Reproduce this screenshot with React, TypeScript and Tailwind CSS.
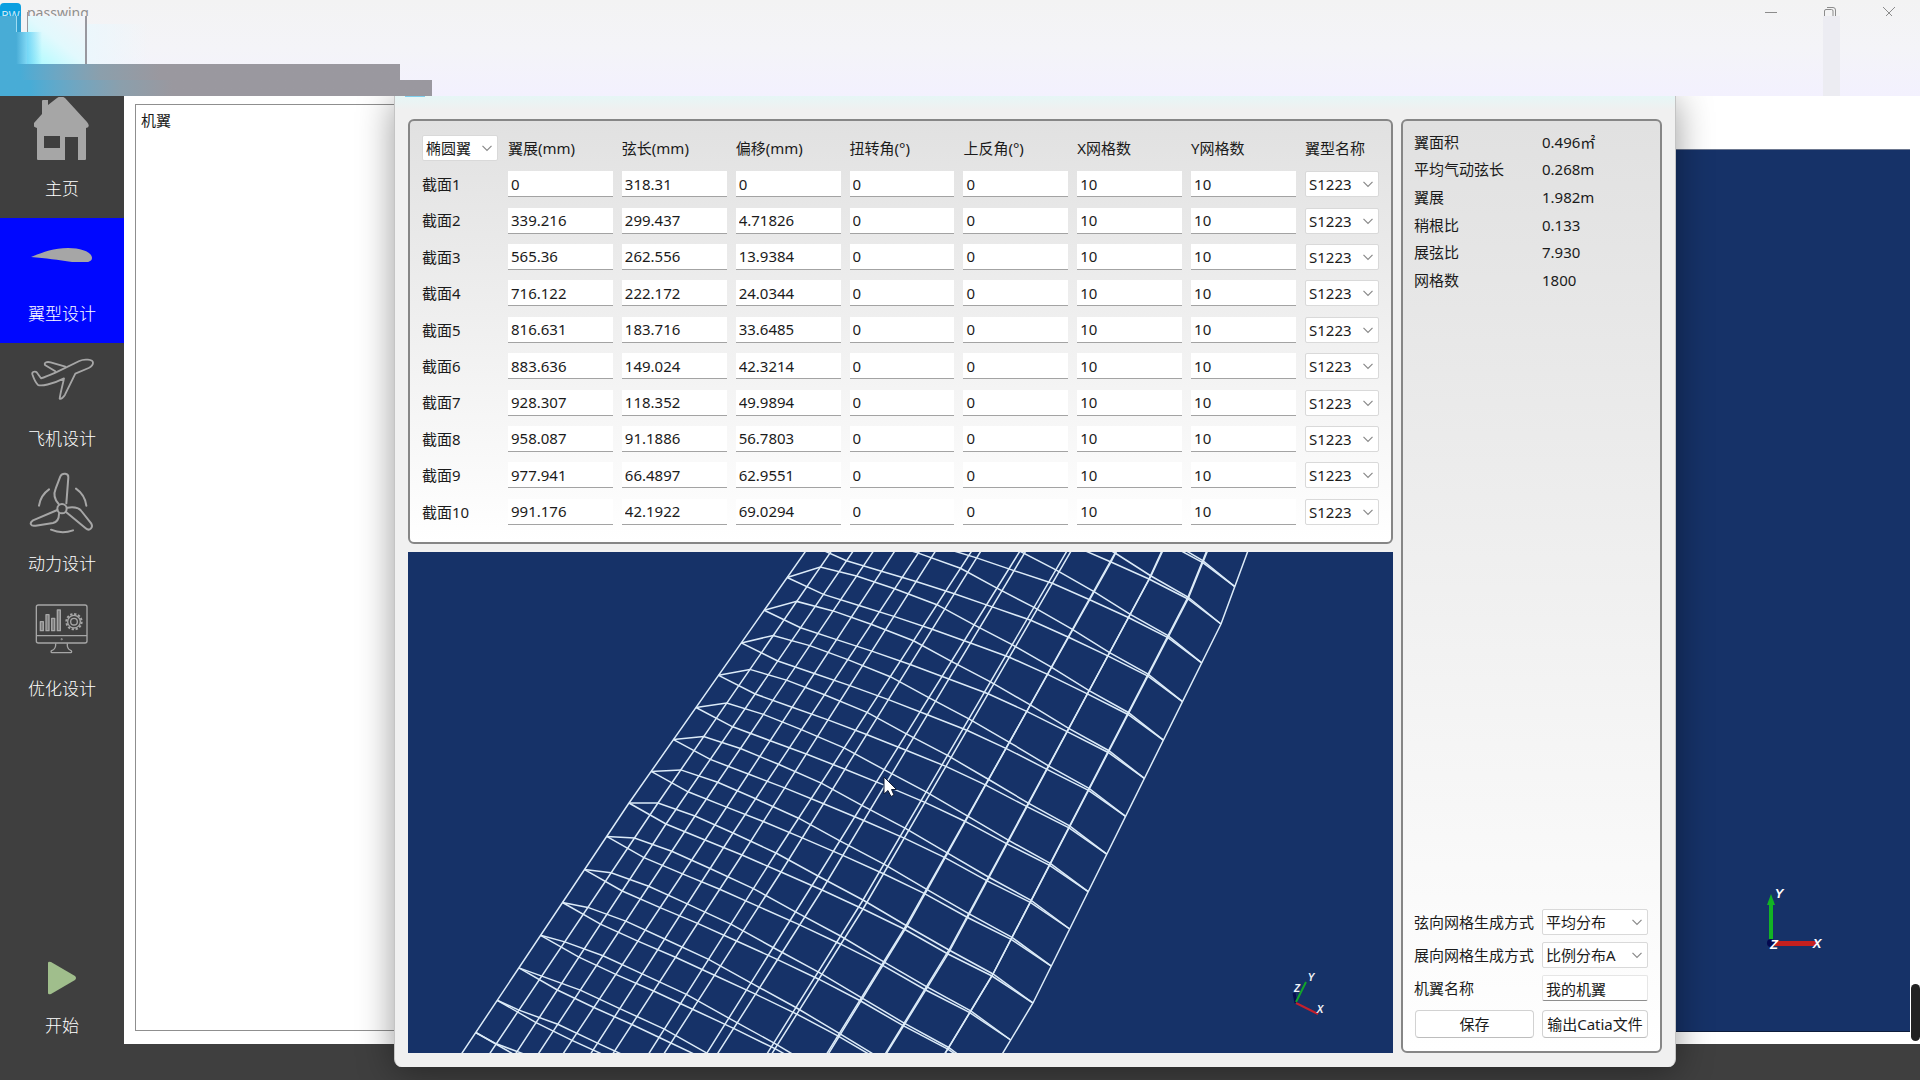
import { useState, type ReactNode } from 'react';

type Point = [number, number];

interface Section {
  rib: number;
  upper: Point[];
  lower: Point[];
}

const COLUMNS = ['翼展(mm)', '弦长(mm)', '偏移(mm)', '扭转角(°)', '上反角(°)', 'X网格数', 'Y网格数'];

const ROWS = [
  ['0', '318.31', '0', '0', '0', '10', '10'],
  ['339.216', '299.437', '4.71826', '0', '0', '10', '10'],
  ['565.36', '262.556', '13.9384', '0', '0', '10', '10'],
  ['716.122', '222.172', '24.0344', '0', '0', '10', '10'],
  ['816.631', '183.716', '33.6485', '0', '0', '10', '10'],
  ['883.636', '149.024', '42.3214', '0', '0', '10', '10'],
  ['928.307', '118.352', '49.9894', '0', '0', '10', '10'],
  ['958.087', '91.1886', '56.7803', '0', '0', '10', '10'],
  ['977.941', '66.4897', '62.9551', '0', '0', '10', '10'],
  ['991.176', '42.1922', '69.0294', '0', '0', '10', '10'],
];

const STATS = [
  ['翼面积', '0.496㎡'],
  ['平均气动弦长', '0.268m'],
  ['翼展', '1.982m'],
  ['稍根比', '0.133'],
  ['展弦比', '7.930'],
  ['网格数', '1800'],
];

// projected section outlines, leading edge first
const SECTIONS: Section[] = [
  {
    rib: -5,
    upper: [[903, 410], [938, 393], [973, 399], [1010, 409], [1050, 423], [1084, 441], [1117, 458], [1153, 480], [1185, 503], [1218, 523], [1249, 548]],
    lower: [[903, 410], [939, 424], [972, 432], [1005, 440], [1042, 450], [1077, 461], [1114, 472], [1149, 489], [1183, 505], [1218, 525], [1249, 548]],
  },
  {
    rib: -3,
    upper: [[857, 478], [892, 463], [928, 470], [966, 481], [1008, 495], [1043, 514], [1078, 532], [1115, 553], [1151, 576], [1188, 597], [1221, 624]],
    lower: [[857, 478], [893, 493], [927, 502], [961, 511], [999, 522], [1036, 534], [1074, 546], [1111, 562], [1149, 579], [1188, 599], [1221, 624]],
  },
  {
    rib: 7,
    upper: [[629, 803], [658, 803], [695, 816], [733, 833], [776, 853], [818, 876], [863, 900], [907, 926], [949, 950], [993, 974], [1033, 1003]],
    lower: [[629, 803], [666, 824], [705, 840], [742, 855], [781, 872], [822, 890], [863, 909], [904, 929], [948, 954], [992, 976], [1033, 1003]],
  },
  {
    rib: 17,
    upper: [[412, 1128], [429, 1144], [469, 1159], [510, 1179], [556, 1200], [599, 1225], [644, 1251], [690, 1279], [730, 1307], [776, 1333], [816, 1363]],
    lower: [[412, 1128], [452, 1151], [486, 1170], [525, 1189], [564, 1209], [605, 1230], [647, 1252], [688, 1278], [731, 1305], [776, 1333], [816, 1363]],
  },
];

function blend(a: Point[], b: Point[], t: number): Point[] {
  return a.map(([x, y], i) => [x + (b[i][0] - x) * t, y + (b[i][1] - y) * t]);
}

function toPoints(points: Point[]) {
  return points.map(([x, y]) => `${x.toFixed(1)},${y.toFixed(1)}`).join(' ');
}

function buildWing() {
  const lines: string[] = [];
  for (let s = 0; s < SECTIONS.length - 1; s++) {
    const a = SECTIONS[s];
    const b = SECTIONS[s + 1];
    const count = b.rib - a.rib;
    // the last rib of a segment is the first of the next one
    for (let i = 0; i < count; i++) {
      const u = i / count;
      const t = u * (1 + 0.03 * (1 - u));
      lines.push(toPoints(blend(a.upper, b.upper, t)));
      lines.push(toPoints(blend(a.lower, b.lower, t)));
    }
  }
  for (let j = 0; j <= 10; j++) {
    lines.push(toPoints(SECTIONS.map((s) => s.upper[j])));
    if (j > 0 && j < 10) lines.push(toPoints(SECTIONS.map((s) => s.lower[j])));
  }
  return lines;
}

const WING_LINES = buildWing();

function HomeIcon() {
  return (
    <svg width="57" height="64" viewBox="34 97 57 64" fill="#a6a6a6">
      <path
        fillRule="evenodd"
        d="M42 101q0-1 1-1h5v5l9-7q4-3 8 0l22 24q4 5-1 6v31q0 1-1 1h-7v-23H65v23H38q-1 0-1-1v-31q-5-1-3-5l8-9zM44 136v12h16v-12z"
      />
    </svg>
  );
}

function AirfoilIcon() {
  return (
    <svg width="62" height="16" viewBox="31 247 62 16" fill="#a6a6a6">
      <path d="M31 258c10-4 22-9 37-9c13 0 24 4 24 10c0 6-13 5-20 4c-14-2-26-4-41-5z" />
    </svg>
  );
}

function PlaneIcon() {
  return (
    <svg width="65" height="45" viewBox="88 57 195 135" fill="none" stroke="#a6a6a6" strokeWidth="5.5" strokeLinecap="round" strokeLinejoin="round">
      <path d="M277 74C277 64 250 62 236 69L166 103C150 110 134 117 121 121L109 104C104 98 93 101 95 109C99 121 104 133 111 140C120 146 155 139 190 121C186 142 180 160 177 182C181 185 188 178 193 170L224 107L264 90C273 85 277 81 277 74Z" />
      <path d="M164 100L134 82C128 74 138 70 150 73L194 86" />
    </svg>
  );
}

function PropellerIcon() {
  return (
    <svg width="66" height="65" viewBox="88 393 198 195" fill="none" stroke="#a6a6a6" strokeWidth="6" strokeLinecap="round" strokeLinejoin="round">
      <circle cx="187" cy="503" r="14" />
      <path d="M177 489C161 472 163 455 168 443L182 406C188 394 207 396 206 409L200 487" />
      <path d="M199 513L258 562C270 572 281 559 275 548L245 510C236 498 222 497 203 500" />
      <path d="M173 507L100 538C88 546 93 557 108 554L160 546C172 543 178 532 178 518" />
      <path d="M118 494A73 73 0 0 1 148 445M229 443A73 73 0 0 1 260 494M154 566A90 90 0 0 0 220 568" />
    </svg>
  );
}

function MonitorIcon() {
  return (
    <svg width="54" height="51" viewBox="105 792 162 153" fill="none" stroke="#a6a6a6" strokeWidth="4" strokeLinejoin="round">
      <rect x="109" y="795" width="152" height="114" rx="6" />
      <path d="M109 887H261M167 910C168 922 163 929 155 932C152 934 153 938 156 938H212C216 938 216 933 212 931C204 928 201 920 202 910" />
      <path d="M121 845h9v27h-9zM138 824h9v48h-9zM155 835h9v37h-9zM172 810h9v62h-9z" fill="#7c7c7c" />
      <circle cx="222" cy="845" r="10" />
      <circle cx="222" cy="845" r="19" />
      <circle cx="222" cy="845" r="23" strokeWidth="6" strokeDasharray="7 5" />
      <circle cx="185" cy="898" r="1" />
    </svg>
  );
}

const NAV: { label: string; icon: ReactNode }[] = [
  { label: '主页', icon: <HomeIcon /> },
  { label: '翼型设计', icon: <AirfoilIcon /> },
  { label: '飞机设计', icon: <PlaneIcon /> },
  { label: '动力设计', icon: <PropellerIcon /> },
  { label: '优化设计', icon: <MonitorIcon /> },
];

function TitleBar() {
  return (
    <header className="relative z-20 h-24 shrink-0 overflow-hidden bg-linear-to-b from-[#f3f3f3] via-[#f4f4f8] to-[#f3f1fe]">
      <div className="flex h-4 items-start overflow-hidden">
        <div className="mt-[3px] h-6 w-[21px] shrink-0 rounded-t bg-[#0a9fe0] pt-[5px] text-center text-xs leading-4 text-[#c9e6f3]">PW</div>
        <h1 className="ml-1.5 text-sm leading-[26px] text-[#8f8f8f]">passwing</h1>
        <div className="ml-auto flex items-start gap-[47px] pr-[25px] pt-1.5 text-[#8c8c8c]">
          <button type="button" aria-label="最小化" className="block h-3 w-3">
            <svg width="12" height="12" viewBox="0 0 12 12" stroke="currentColor"><path d="M0 6.5H12" /></svg>
          </button>
          <button type="button" aria-label="还原" className="block h-3 w-3">
            <svg width="12" height="12" viewBox="0 0 12 12" fill="none" stroke="currentColor">
              <path d="M0.5 12V5Q0.5 3.500 2 3.500H7.500Q9 3.500 9 5V12M3 1.500H9Q11.500 1.500 11.500 4V12" />
            </svg>
          </button>
          <button type="button" aria-label="关闭" className="block h-3 w-3">
            <svg width="12" height="12" viewBox="0 0 12 12" stroke="currentColor"><path d="M0 1L12 13M12 1L0 13" /></svg>
          </button>
        </div>
      </div>
      {/* smeared strips below the caption */}
      <div className="absolute left-0 top-6 h-10 w-[150px] bg-linear-to-r from-[#a8fbff] via-[#eaf7fd] to-transparent" />
      <div className="absolute left-[27px] top-4 h-12 w-[60px] border-r-2 border-[#98989f] bg-linear-to-tr from-[#a4fbff] via-[#e2f9fd] to-[#f3f3f8]" />
      <div className="absolute left-[26px] top-8 h-8 w-4 bg-linear-to-r from-[#6fd4f5] to-transparent" />
      <div className="absolute left-[27px] top-3 h-5 w-px bg-[#98989f]" />
      <div className="absolute left-0 top-4 h-20 w-[27px] bg-linear-to-r from-[#48acd6] from-60% to-[#7fd8f5]" />
      <div className="absolute left-4 top-4 h-4 w-[5px] border-l border-[#9fdcf2] bg-[#2f9fd0]" />
      <div className="absolute left-[21px] top-4 h-4 w-1.5 bg-[#f3f3f5]" />
      <div className="absolute left-0 top-16 h-4 w-[400px] bg-linear-to-r from-[#48acd6] from-5% via-[#8b9fac] via-25% to-[#9a989f] to-40%" />
      <div className="absolute left-0 top-20 h-4 w-[432px] bg-linear-to-r from-[#48acd6] from-7% via-[#8b9fac] via-28% to-[#9a989f] to-40%" />
      <div className="absolute right-20 top-4 h-20 w-[17px] bg-[#ececf2]" />
    </header>
  );
}

function Sidebar() {
  return (
    <nav className="flex w-[124px] shrink-0 flex-col bg-[#3f3f3f] text-[17px] font-light text-white">
      <div className="-mt-[3px]">
        {NAV.map((item) => (
          <button
            key={item.label}
            type="button"
            className={`flex h-[125px] w-full flex-col items-center ${item.label === '翼型设计' ? 'bg-[#0007ff]' : ''}`}
          >
            <span className="flex h-[72px] items-center">{item.icon}</span>
            <span className="leading-[48px]">{item.label}</span>
          </button>
        ))}
      </div>
      <button type="button" className="mb-8 mt-auto flex flex-col items-center">
        <span className="flex h-[52px] items-center">
          <svg width="28" height="34" viewBox="0 0 28 34" fill="#a0be8c">
            <path d="M0 2Q0 0 3 1L27 15Q29 17 27 19L3 33Q0 34 0 32Z" />
          </svg>
        </span>
        <span className="leading-[44px]">开始</span>
      </button>
    </nav>
  );
}

function Select({ label, id, options }: { label?: string; id?: string; options: string[] }) {
  return (
    <span className="relative block w-full">
      <select
        id={id}
        aria-label={label}
        className="block h-[26px] w-full appearance-none rounded-xs border border-[#d9d9d9] bg-white pl-[3px] pr-4 leading-6 text-[#1b1b1b] outline-none"
      >
        {options.map((o) => (
          <option key={o}>{o}</option>
        ))}
      </select>
      <svg className="pointer-events-none absolute right-1.5 top-2.5" width="10" height="7" viewBox="0 0 10 7" fill="none" stroke="#8a8a8a" strokeWidth="1.2">
        <path d="M0.500 0.800L5 5.500L9.500 0.800" />
      </svg>
    </span>
  );
}

function SectionTable() {
  const [rows, setRows] = useState(ROWS);

  function update(r: number, c: number, value: string) {
    setRows(rows.map((row, i) => (i === r ? row.map((v, j) => (j === c ? value : v)) : row)));
  }

  return (
    <div className="rounded-md border-2 border-[#868686] bg-linear-to-b from-[#e1e1e1] to-white px-3 pb-3 pt-[9px]">
      <table className="h-[400px] w-full table-fixed text-left">
        <thead>
          <tr className="h-9">
            <th className="w-[86px] p-0 pr-[10px] font-normal">
              <Select label="翼平面形状" options={['椭圆翼', '矩形翼', '梯形翼']} />
            </th>
            {COLUMNS.map((c) => (
              <th key={c} scope="col" className="p-0 font-normal">{c}</th>
            ))}
            <th scope="col" className="w-[74px] p-0 font-normal">翼型名称</th>
          </tr>
        </thead>
        <tbody>
          {rows.map((row, r) => (
            <tr key={r} className="h-9">
              <th scope="row" className="p-0 font-normal">截面{r + 1}</th>
              {row.map((value, c) => (
                <td key={c} className="p-0 pr-[9px]">
                  <input
                    type="text"
                    aria-label={`截面${r + 1} ${COLUMNS[c]}`}
                    value={value}
                    onChange={(e) => update(r, c, e.target.value)}
                    className="block h-[26px] w-full border-b border-[#a3a3a3] bg-white px-[3px] text-[#1b1b1b] outline-none"
                  />
                </td>
              ))}
              <td className="p-0">
                <Select label={`截面${r + 1} 翼型名称`} options={['S1223', 'NACA0012', 'CLARK Y']} />
              </td>
            </tr>
          ))}
        </tbody>
      </table>
    </div>
  );
}

function WingView() {
  return (
    <div className="min-h-0 flex-1 bg-[#163268]">
      <svg className="block h-full w-full" viewBox="408 552 985 501" preserveAspectRatio="xMidYMid slice">
        <g fill="none" stroke="#dcebf8" strokeWidth="1.500">
          {WING_LINES.map((points, i) => (
            <polyline key={i} points={points} />
          ))}
        </g>
        <g strokeWidth="2" fill="none">
          <path d="M1296 1003L1294 993" stroke="#06104f" strokeWidth="3" />
          <path d="M1296 1002L1306 982" stroke="#12a52a" />
          <path d="M1296 1003L1318 1014" stroke="#c4202c" />
        </g>
        <g fill="#f2f4f8" fontFamily="Liberation Sans, sans-serif" fontSize="10" fontStyle="italic" fontWeight="bold" textAnchor="middle">
          <text x="1311" y="981">Y</text>
          <text x="1297" y="992">Z</text>
          <text x="1320" y="1013">X</text>
        </g>
        <path d="M884 777V794L888 790.500L891 796.500L894 795L891.500 789.500H896.500Z" fill="#fff" stroke="#111d38" strokeWidth="1" />
      </svg>
    </div>
  );
}

function SidePanel() {
  return (
    <aside className="flex w-[261px] shrink-0 flex-col justify-between rounded-md border-2 border-[#868686] bg-linear-to-b from-[#e1e1e1] to-white pb-[13px] pl-[11px] pr-3 pt-[7px]">
      <dl className="grid h-[166px] grid-cols-[128px_1fr] grid-rows-6 items-center">
        {STATS.map(([name, value]) => (
          <div key={name} className="contents">
            <dt>{name}</dt>
            <dd>{value}</dd>
          </div>
        ))}
      </dl>
      <form className="grid grid-cols-[128px_1fr] items-center gap-y-[7px]" onSubmit={(e) => e.preventDefault()}>
        <label htmlFor="chord-mesh">弦向网格生成方式</label>
        <Select id="chord-mesh" options={['平均分布', '余弦分布']} />
        <label htmlFor="span-mesh">展向网格生成方式</label>
        <Select id="span-mesh" options={['比例分布A', '比例分布B']} />
        <label htmlFor="wing-name">机翼名称</label>
        <input
          id="wing-name"
          type="text"
          defaultValue="我的机翼"
          className="h-[26px] w-full rounded-xs border border-[#e6e6e6] border-b-[#8e8e8e] bg-white px-[3px] text-[#1b1b1b] outline-none"
        />
        <button type="button" className="ml-px mr-2 mt-0.5 h-7 rounded border border-[#d2d2d2] border-b-[#bdbdbd] bg-white">保存</button>
        <button type="button" className="mt-0.5 h-7 whitespace-nowrap rounded border border-[#d2d2d2] border-b-[#bdbdbd] bg-white">输出Catia文件</button>
      </form>
    </aside>
  );
}

function WingDialog() {
  return (
    <section
      role="dialog"
      aria-label="机翼设计"
      className="absolute bottom-[13px] left-[394px] right-[244px] top-0 z-10 flex gap-2 rounded-b-lg border-x border-[#c4c4c4] bg-[#f0f0f0] bg-linear-to-b from-[#e6f6f6] to-[#f0f0f0] to-[14px] px-[13px] pb-[14px] pt-[23px] shadow-[0_4px_36px_rgba(0,0,0,0.4)]"
    >
      <div className="absolute left-2.5 top-0 h-px w-5 bg-[#7fd0ee]" />
      <div className="flex min-w-0 flex-1 flex-col gap-2">
        <SectionTable />
        <WingView />
      </div>
      <SidePanel />
    </section>
  );
}

function SceneView() {
  return (
    <div className="mb-0.5 mt-[45px] flex flex-1 items-end justify-end border-y border-y-[#6d7890] border-b-[#0d1c3c] bg-[#163268] pb-[75px] pr-20">
      <svg width="70" height="76" viewBox="1760 880 70 76">
        <path d="M1771 943V903" stroke="#12b424" strokeWidth="4" />
        <path d="M1767 905L1771 894L1775 905Z" fill="#12b424" />
        <path d="M1773 943.500H1816" stroke="#c4201f" strokeWidth="5" />
        <circle cx="1771" cy="943" r="4" fill="#04094f" />
        <g fill="#fff" fontFamily="Liberation Sans, sans-serif" fontSize="13" fontStyle="italic" fontWeight="bold" textAnchor="middle">
          <text x="1779" y="898">Y</text>
          <text x="1774" y="949">Z</text>
          <text x="1817" y="948">X</text>
        </g>
      </svg>
    </div>
  );
}

export default function App() {
  return (
    <div className="flex min-h-screen flex-col overflow-hidden bg-[#3f3f3f] font-['Noto_Sans','Noto_Sans_CJK_SC',sans-serif] text-[15px] text-[#1b1b1b]">
      <TitleBar />
      <div className="relative flex flex-1">
        <Sidebar />
        <main className="mb-9 flex flex-1 bg-white pb-[10px] pl-[11px] pr-[10px] pt-2">
          <div className="mb-[3px] w-[380px] border border-[#8f8f8f] px-[5px] pt-1 leading-[22px]">机翼</div>
          <SceneView />
        </main>
        <WingDialog />
        <div className="absolute bottom-[39px] right-0 z-20 h-[57px] w-[9px] rounded-full bg-[#222222]" />
      </div>
    </div>
  );
}
